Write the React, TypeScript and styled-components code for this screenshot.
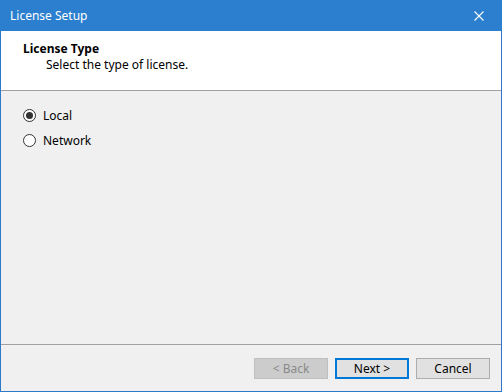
import React, { useState } from 'react';
import styled, { createGlobalStyle } from 'styled-components';

const GlobalStyle = createGlobalStyle`
  html, body {
    margin: 0;
    padding: 0;
    background: #ffffff;
  }
  body {
    font-family: 'Segoe UI', 'Noto Sans', 'Liberation Sans', sans-serif;
    font-size: 12px;
  }
`;

const Window = styled.div`
  width: 502px;
  height: 392px;
  box-sizing: border-box;
  border: 1px solid #2b79c8;
  border-top: none;
  display: flex;
  flex-direction: column;
  background: #f0f0f0;
  color: #000;
`;

const TitleBar = styled.div`
  height: 31px;
  margin: 0 -1px;
  background: #2b7fce;
  color: #ffffff;
  display: flex;
  align-items: center;
  padding-left: 10px;
  flex-shrink: 0;
`;

const TitleText = styled.div`
  flex: 1;
  font-size: 12px;
`;

const CloseButton = styled.div`
  width: 46px;
  height: 31px;
  display: flex;
  align-items: center;
  justify-content: center;
`;

const Header = styled.div`
  height: 60px;
  background: #ffffff;
  border-bottom: 1px solid #a0a0a0;
  padding: 10px 0 0 22px;
  box-sizing: border-box;
  flex-shrink: 0;
`;

const HeaderTitle = styled.div`
  font-weight: 700;
  line-height: 16px;
`;

const HeaderSub = styled.div`
  padding-left: 23px;
  line-height: 16px;
`;

const Body = styled.div`
  flex: 1;
  padding: 16px 0 0 22px;
  display: flex;
  flex-direction: column;
  gap: 9px;
`;

const RadioRow = styled.label`
  display: flex;
  align-items: center;
  gap: 7px;
  height: 16px;
  cursor: default;
`;

const RadioCircle = styled.span<{ $checked: boolean }>`
  width: 13px;
  height: 13px;
  box-sizing: border-box;
  border: 1px solid #333333;
  border-radius: 50%;
  background: #ffffff;
  display: flex;
  align-items: center;
  justify-content: center;
  &::after {
    content: '';
    width: 7px;
    height: 7px;
    border-radius: 50%;
    background: ${(p) => (p.$checked ? '#333333' : 'transparent')};
  }
`;

const Footer = styled.div`
  height: 47px;
  border-top: 1px solid #a0a0a0;
  display: flex;
  justify-content: flex-end;
  align-items: flex-start;
  padding: 13px 11px 0 0;
  box-sizing: border-box;
  gap: 7px;
  flex-shrink: 0;
`;

const Button = styled.div<{ $disabled?: boolean; $default?: boolean }>`
  width: 74px;
  height: 21px;
  box-sizing: border-box;
  display: flex;
  align-items: center;
  justify-content: center;
  background: ${(p) => (p.$disabled ? '#cccccc' : '#e1e1e1')};
  border: ${(p) => (p.$default ? '2px solid #0078d7' : p.$disabled ? '1px solid #bfbfbf' : '1px solid #adadad')};
  color: ${(p) => (p.$disabled ? '#8a8a8a' : '#000000')};
`;

export default function App() {
  const [choice, setChoice] = useState('local');
  return (
    <>
      <GlobalStyle />
      <Window>
        <TitleBar>
          <TitleText>License Setup</TitleText>
          <CloseButton>
            <svg width="10" height="10" viewBox="0 0 10 10">
              <path d="M0.5 0.5 L9.5 9.5 M9.5 0.5 L0.5 9.5" stroke="#ffffff" strokeWidth="1.1" />
            </svg>
          </CloseButton>
        </TitleBar>
        <Header>
          <HeaderTitle>License Type</HeaderTitle>
          <HeaderSub>Select the type of license.</HeaderSub>
        </Header>
        <Body>
          <RadioRow onClick={() => setChoice('local')}>
            <RadioCircle $checked={choice === 'local'} />
            Local
          </RadioRow>
          <RadioRow onClick={() => setChoice('network')}>
            <RadioCircle $checked={choice === 'network'} />
            Network
          </RadioRow>
        </Body>
        <Footer>
          <Button $disabled>&lt; Back</Button>
          <Button $default>Next &gt;</Button>
          <Button>Cancel</Button>
        </Footer>
      </Window>
    </>
  );
}
